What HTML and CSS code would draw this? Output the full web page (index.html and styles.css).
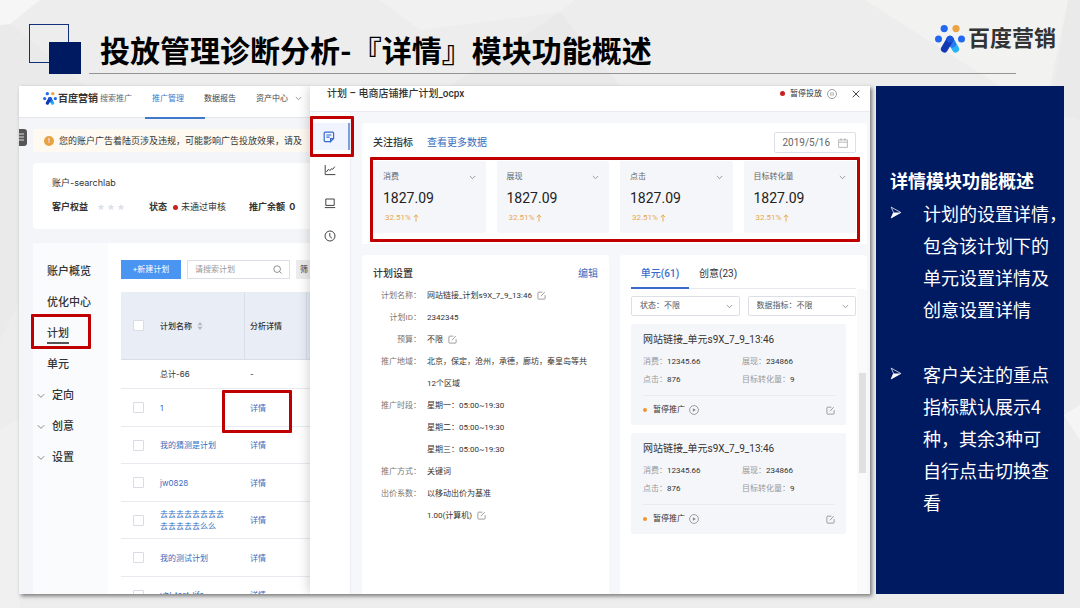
FILE: index.html
```html
<!DOCTYPE html>
<html lang="zh-CN">
<head>
<meta charset="utf-8">
<meta name="viewport" content="width=device-width, initial-scale=1">
<title>投放管理诊断分析-『详情』模块功能概述</title>
<link rel="stylesheet" href="styles.css">
</head>
<body>
<svg class="defs" width="0" height="0" aria-hidden="true">
  <symbol id="paw" viewBox="0 0 30 28">
    <circle cx="9.2" cy="3.6" r="3.6" fill="#2468f2"/>
    <circle cx="21" cy="3.6" r="3.6" fill="#eba443"/>
    <circle cx="3.5" cy="14" r="3.5" fill="#2468f2"/>
    <circle cx="26.5" cy="14" r="3.5" fill="#2468f2"/>
    <path d="M15 14.4 20.6 24" stroke="#27b3f5" stroke-width="7" stroke-linecap="round"/>
    <path d="M15 14.4 17.6 19" stroke="#2a7cf0" stroke-width="7" stroke-linecap="round"/>
    <path d="M15 14.4 9.4 24" stroke="#1238b4" stroke-width="7" stroke-linecap="round"/>
    <circle cx="15" cy="14.2" r="3.5" fill="#1c55dc"/>
  </symbol>
  <symbol id="chev" viewBox="0 0 8 6"><path d="M.8 1.2 4 4.4 7.2 1.2" fill="none" stroke="currentColor"/></symbol>
  <symbol id="edit" viewBox="0 0 10 10"><path d="M6 1.3H1.8Q1 1.3 1 2.1V8.2Q1 9 1.8 9H8.2Q9 9 9 8.2V4.6M4.4 5.8 8.6 1.2" fill="none" stroke="currentColor" stroke-width=".9"/></symbol>
  <symbol id="play" viewBox="0 0 10 10"><circle cx="5" cy="5" r="4.4" fill="none" stroke="currentColor" stroke-width=".8"/><path d="M3.9 3.2 6.9 5 3.9 6.8Z" fill="currentColor"/></symbol>
  <symbol id="star" viewBox="0 0 10 10"><path d="M5 .8 6.2 3.7 9.4 3.9 6.9 5.9 7.7 9 5 7.3 2.3 9 3.1 5.9 .6 3.9 3.8 3.7Z" fill="#dcdfec"/></symbol>
  <symbol id="up" viewBox="0 0 6 9"><path d="M3 8.6V1M.5 3.6 3 1 5.5 3.6" fill="none" stroke="currentColor" stroke-width="1.1"/></symbol>
  <symbol id="arrow" viewBox="0 0 12 14"><path d="M.8 1.2 11.2 7 .8 12.8 3.4 7Z" fill="none" stroke="#fff" stroke-width=".8"/><path d="M3.2 7H11.4L.6 13.2Z" fill="#fff"/></symbol>
</svg>

<div class="slide">
  <svg class="backdrop" viewBox="0 0 1080 608" preserveAspectRatio="none" aria-hidden="true">
    <path d="M0 0H40L10 24 0 25Z" fill="#f6f6f6"/>
    <path d="M0 25H12L90 90 20 300 0 340Z" fill="#eaeaeb"/>
    <path d="M380 0H575L560 12 420 30Z" fill="#f1f1f1"/>
    <path d="M560 12 620 86H450Z" fill="#e9e9ea"/>
    <path d="M865 0H1068L1050 86H1000Z" fill="#f2f2f1"/>
    <path d="M1068 0H1080V120L1050 112Z" fill="#eaeaeb"/>
    <path d="M1064 415 1080 405V440Z" fill="#f5f5f5"/>
    <path d="M0 430 20 418V608H0Z" fill="#f0f0f0"/>
  </svg>

  <header class="slide-head">
    <div class="mark" aria-hidden="true"></div>
    <div class="headline">
      <h1>投放管理诊断分析-『详情』模块功能概述</h1>
      <div class="brand"><svg class="brand-paw"><use href="#paw"/></svg><span>百度营销</span></div>
    </div>
  </header>

  <main class="board">
    <div class="shot">
      <section class="base">
        <nav class="topnav">
          <svg class="small-paw"><use href="#paw"/></svg><b class="logo-text">百度营销</b><span class="product">搜索推广</span>
          <a class="nav-link active" href="#">推广管理</a>
          <a class="nav-link" href="#">数据报告</a>
          <a class="nav-link" href="#">资产中心 <svg class="chev"><use href="#chev"/></svg></a>
        </nav>
        <div class="base-body">
          <div class="dock" aria-hidden="true"><svg viewBox="0 0 8 16"><path d="M0 5H5M0 8H5M0 11H5" stroke="#ddd" fill="none"/></svg></div>
          <div class="notice"><span class="warn">!</span>您的账户广告着陆页涉及违规，可能影响广告投放效果，请及</div>
          <div class="account">
            <div class="account-name">账户-searchlab</div>
            <div class="account-row">
              <b>客户权益</b>
              <span class="stars"><svg><use href="#star"/></svg><svg><use href="#star"/></svg><svg><use href="#star"/></svg></span>
              <b>状态</b><i class="dot red"></i><span class="state">未通过审核</span>
              <b class="balance">推广余额&nbsp; 0</b>
            </div>
          </div>
          <div class="workspace">
            <nav class="side">
              <a href="#">账户概览</a>
              <a href="#">优化中心</a>
              <a class="current" href="#"><span>计划</span></a>
              <a href="#">单元</a>
              <a class="fold" href="#"><svg class="chev"><use href="#chev"/></svg>定向</a>
              <a class="fold" href="#"><svg class="chev"><use href="#chev"/></svg>创意</a>
              <a class="fold" href="#"><svg class="chev"><use href="#chev"/></svg>设置</a>
            </nav>
            <div class="plans">
              <div class="tools">
                <button class="new">+新建计划</button>
                <div class="search">
                  <input type="text" placeholder="请搜索计划" aria-label="请搜索计划">
                  <svg viewBox="0 0 10 10"><circle cx="4.6" cy="4.6" r="3.7" fill="none" stroke="#777" stroke-width=".9"/><path d="M7.2 7.2 9.4 9.4" stroke="#777" stroke-width=".9"/></svg>
                </div>
                <button class="filter">筛</button>
              </div>
              <table>
                <thead><tr><th class="c-check"><input type="checkbox" aria-label="全选"></th><th class="c-name">计划名称 <svg class="sort" viewBox="0 0 6 8"><path d="M3 0 5.6 3.3H.4ZM3 8 .4 4.7H5.6Z" fill="#b3b8c6"/></svg></th><th class="c-detail">分析详情</th><th></th></tr></thead>
                <tbody>
                  <tr class="total"><td></td><td>总计-66</td><td>-</td><td></td></tr>
                  <tr><td><input type="checkbox" aria-label="1"></td><td><a href="#">1</a></td><td class="marked"><a href="#">详情</a></td><td></td></tr>
                  <tr><td><input type="checkbox" aria-label="我的猜测是计划"></td><td><a href="#">我的猜测是计划</a></td><td><a href="#">详情</a></td><td></td></tr>
                  <tr><td><input type="checkbox" aria-label="jw0828"></td><td><a href="#">jw0828</a></td><td><a href="#">详情</a></td><td></td></tr>
                  <tr><td><input type="checkbox" aria-label="去去去"></td><td><a href="#">去去去去去去去去<br>去去去去去么么</a></td><td><a href="#">详情</a></td><td></td></tr>
                  <tr><td><input type="checkbox" aria-label="我的测试计划"></td><td><a href="#">我的测试计划</a></td><td><a href="#">详情</a></td><td></td></tr>
                  <tr><td><input type="checkbox" aria-label="ybl-test-life"></td><td><a href="#">ybl-test-life</a></td><td><a href="#">详情</a></td><td></td></tr>
                </tbody>
              </table>
            </div>
          </div>
        </div>
      </section>

      <section class="drawer">
        <div class="drawer-head">
          <h2>计划 – 电商店铺推广计划_ocpx</h2>
          <i class="dot red"></i><span class="pause-text">暂停投放</span>
          <svg class="pause" viewBox="0 0 10 10"><circle cx="5" cy="5" r="4.5" fill="none" stroke="#888" stroke-width=".8"/><path d="M3.9 3.2V6.8M6.1 3.2V6.8" stroke="#888" stroke-width=".8"/></svg>
          <button class="close" aria-label="关闭"><svg viewBox="0 0 8 8"><path d="M.7.7 7.3 7.3M7.3.7.7 7.3" stroke="#444"/></svg></button>
        </div>
        <div class="drawer-body">
          <nav class="rail">
            <a class="on" href="#" aria-label="详情"><svg viewBox="0 0 12 12"><path d="M7.6 10.6H2.2Q1.2 10.6 1.2 9.6V2.2Q1.2 1.2 2.2 1.2H9.6Q10.6 1.2 10.6 2.2V7.4L7.6 10.6V7.6H10.6M3.4 4H8.4M3.4 6.2H6.6" fill="none" stroke="#3a6bcb" stroke-width="1.2"/></svg></a>
            <a href="#" aria-label="趋势"><svg viewBox="0 0 12 12"><path d="M1.2 1V10.6H11.4M2.4 8 4.6 5.2 6 6.6 7.6 4.6 8.6 5.4 10.8 2.6" fill="none" stroke="#444"/></svg></a>
            <a href="#" aria-label="设备"><svg viewBox="0 0 12 12"><path d="M1.8 2H10.2V8.4H1.8ZM.8 10.6H11.2" fill="none" stroke="#444"/></svg></a>
            <a href="#" aria-label="历史"><svg viewBox="0 0 12 12"><circle cx="6" cy="6" r="5" fill="none" stroke="#444"/><path d="M5.8 3V6.4L8 8.4" fill="none" stroke="#444"/></svg></a>
          </nav>
          <div class="content">
            <section class="card focus">
              <div class="focus-head">
                <h3>关注指标</h3><a class="more" href="#">查看更多数据</a>
                <button class="date">2019/5/16<svg viewBox="0 0 10 10"><path d="M.6 1.8H9.4V9.4H.6ZM.6 4.2H9.4M3 .2V2.8M7 .2V2.8" fill="none" stroke="#aaa" stroke-width=".8"/></svg></button>
              </div>
              <div class="metrics">
                <div class="metric"><div class="metric-name">消费<svg class="chev"><use href="#chev"/></svg></div><div class="value">1827.09</div><div class="rate">32.51%<svg><use href="#up"/></svg></div></div>
                <div class="metric"><div class="metric-name">展现<svg class="chev"><use href="#chev"/></svg></div><div class="value">1827.09</div><div class="rate">32.51%<svg><use href="#up"/></svg></div></div>
                <div class="metric"><div class="metric-name">点击<svg class="chev"><use href="#chev"/></svg></div><div class="value">1827.09</div><div class="rate">32.51%<svg><use href="#up"/></svg></div></div>
                <div class="metric"><div class="metric-name">目标转化量<svg class="chev"><use href="#chev"/></svg></div><div class="value">1827.09</div><div class="rate">32.51%<svg><use href="#up"/></svg></div></div>
              </div>
            </section>
            <div class="pair">
              <section class="card settings">
                <div class="settings-head"><h3>计划设置</h3><a href="#">编辑</a></div>
                <dl>
                  <dt>计划名称：</dt><dd>网站链接_计划s9X_7_9_13:46<svg class="edit"><use href="#edit"/></svg></dd>
                  <dt>计划ID：</dt><dd>2342345</dd>
                  <dt>预算：</dt><dd>不限<svg class="edit"><use href="#edit"/></svg></dd>
                  <dt>推广地域：</dt><dd>北京，保定，沧州，承德，廊坊，秦皇岛等共<br>12个区域</dd>
                  <dt>推广时段：</dt><dd>星期一：05:00~19:30<br>星期二：05:00~19:30<br>星期三：05:00~19:30</dd>
                  <dt>推广方式：</dt><dd>关键词</dd>
                  <dt>出价系数：</dt><dd>以移动出价为基准<br>1.00(计算机)<svg class="edit"><use href="#edit"/></svg></dd>
                </dl>
              </section>
              <section class="card units">
                <div class="tabs"><button class="tab on">单元(61)</button><button class="tab">创意(23)</button></div>
                <div class="unit-area">
                  <div class="filters">
                    <div class="pick"><select aria-label="状态"><option>状态：不限</option></select><svg class="chev"><use href="#chev"/></svg></div>
                    <div class="pick"><select aria-label="数据指标"><option>数据指标：不限</option></select><svg class="chev"><use href="#chev"/></svg></div>
                  </div>
                  <article class="unit">
                    <h4>网站链接_单元s9X_7_9_13:46</h4>
                    <div class="stats"><span>消费：<b>12345.66</b></span><span>展现：<b>234866</b></span><span>点击：<b>876</b></span><span>目标转化量：<b>9</b></span></div>
                    <div class="unit-foot"><i class="dot orange"></i>暂停推广<svg class="play"><use href="#play"/></svg><svg class="edit"><use href="#edit"/></svg></div>
                  </article>
                  <article class="unit">
                    <h4>网站链接_单元s9X_7_9_13:46</h4>
                    <div class="stats"><span>消费：<b>12345.66</b></span><span>展现：<b>234866</b></span><span>点击：<b>876</b></span><span>目标转化量：<b>9</b></span></div>
                    <div class="unit-foot"><i class="dot orange"></i>暂停推广<svg class="play"><use href="#play"/></svg><svg class="edit"><use href="#edit"/></svg></div>
                  </article>
                  <div class="track"><div class="thumb"></div></div>
                </div>
              </section>
            </div>
          </div>
        </div>
      </section>
    </div>

    <aside class="notes">
      <h2>详情模块功能概述</h2>
      <ul>
        <li><svg><use href="#arrow"/></svg><p>计划的设置详情，<br>包含该计划下的<br>单元设置详情及<br>创意设置详情</p></li>
        <li><svg><use href="#arrow"/></svg><p>客户关注的重点<br>指标默认展示4<br>种，其余3种可<br>自行点击切换查<br>看</p></li>
      </ul>
    </aside>
  </main>
</div>
</body>
</html>
```

FILE: styles.css
```css
*, *::before, *::after { box-sizing: border-box; }
body {
  margin: 0;
  font-family: Roboto, "Noto Sans CJK SC", sans-serif;
  font-size: 8px;
  line-height: 12px;
  color: #333;
  background: #ededed;
}
h1, h2, h3, h4, p, ul, dl, dd { margin: 0; padding: 0; }
a { color: #3a6bbd; text-decoration: none; }
button, input, select { font: inherit; color: inherit; border: 0; padding: 0; background: none; }
svg { display: block; flex: none; }
.defs { position: absolute; }

.slide {
  position: relative;
  display: flex;
  flex-direction: column;
  height: 100vh;
  padding: 0 16px 14px 19px;
  overflow: hidden;
}
.backdrop { position: absolute; inset: 0; width: 100%; height: 100%; }

/* slide heading */
.slide-head { position: relative; display: flex; height: 86px; padding: 0 48px 0 10px; flex: none; }
.mark { position: relative; width: 52px; height: 50px; margin-top: 24px; }
.mark::before { content: ""; position: absolute; left: 0; top: 0; width: 40px; height: 39px; border: 1px solid #12307c; }
.mark::after { content: ""; position: absolute; right: 0; bottom: 0; width: 32px; height: 32px; background: #001a62; }
.headline {
  flex: 1;
  display: flex;
  justify-content: space-between;
  height: 74px;
  margin-left: 8px;
  padding-left: 11px;
  border-bottom: 1px solid #949494;
}
.headline h1 { align-self: flex-end; font-size: 30px; line-height: 42px; font-weight: 700; color: #000; white-space: nowrap; }
.brand { display: flex; align-items: center; gap: 3px; height: 30px; margin: 24px -40px 0 0; font-size: 22px; font-weight: 700; color: #333; white-space: nowrap; }
.brand-paw { width: 30px; height: 28px; }

.board { position: relative; display: flex; gap: 6px; flex: 1; min-height: 0; }
.shot { flex: 1; display: flex; min-width: 0; overflow: hidden; background: #fff; box-shadow: 2px 2px 4px #777; }

/* page under the drawer */
.base { width: 291px; flex: none; display: flex; flex-direction: column; overflow: hidden; white-space: nowrap; background: #f3f5f9; }
.topnav { display: flex; align-items: center; height: 32px; padding: 0 0 6px 24px; background: #fff; border-bottom: 1px solid #e3e5ea; flex: none; }
.small-paw { width: 14px; height: 13px; }
.logo-text { margin-left: 1px; font-size: 10px; }
.product { margin-left: 2px; color: #666; }
.nav-link { display: flex; align-items: center; gap: 7px; margin-left: 20px; color: #444; position: relative; }
.nav-link.active { color: #4078cc; }
.nav-link.active::after { content: ""; position: absolute; left: -7px; right: -21px; bottom: -14px; height: 2px; background: #4078cc; }
.chev { width: 7px; height: 5px; color: #888; }
.base-body { position: relative; flex: 1; min-height: 0; padding: 11px 0 0 14px; display: flex; flex-direction: column; }
.dock { position: absolute; left: 0; top: 11px; width: 8px; height: 17px; border-radius: 0 3px 3px 0; background: #555; }
.notice { display: flex; align-items: center; height: 23px; padding-left: 11px; background: #fef9f1; font-size: 9px; color: #333; flex: none; }
.warn { flex: none; width: 10px; height: 10px; margin-right: 5px; border-radius: 50%; background: #e8a33e; color: #fff; font-size: 8px; line-height: 10px; text-align: center; }
.account { display: flex; flex-direction: column; gap: 12px; height: 66px; margin-top: 11px; padding: 14px 0 0 19px; background: #fff; border-radius: 4px 0 0 4px; flex: none; font-family: Inter, "Noto Sans CJK SC", sans-serif; font-size: 9px; }
.account-name { font-size: 9px; }
.account-row { display: flex; align-items: center; }
.stars { display: flex; gap: 2px; margin: 0 24px 0 9px; }
.stars svg { width: 8px; height: 8px; }
.dot { display: block; width: 5px; height: 5px; border-radius: 50%; flex: none; }
.red { background: #c9211e; }
.orange { background: #f2942a; }
.account-row .dot { margin: 0 3px 0 6px; }
.balance { margin-left: 23px; }
.workspace { flex: 1; display: flex; min-height: 0; margin-top: 14px; background: #fff; }
.side { width: 75px; flex: none; padding-top: 13px; background: #fafbfd; }
.side a { position: relative; display: flex; align-items: center; height: 31px; padding-left: 14px; font-size: 11px; font-weight: 500; color: #333; }
.side a.fold { padding-left: 4px; gap: 7px; }
.side .chev { width: 8px; height: 6px; }
.side .current span { margin-top: 2px; line-height: 16px; border-bottom: 2px solid #555; }
.side .current::after { content: ""; position: absolute; left: -2px; top: -4px; width: 60px; height: 35px; border: 3px solid #c00000; border-radius: 1px; }
.plans { flex: none; width: 203px; padding: 17px 0 0 13px; }
.tools { display: flex; gap: 6px; height: 19px; }
.new { flex: none; width: 60px; background: #4a94f2; color: #fff; }
.search { flex: none; display: flex; align-items: center; width: 103px; padding: 0 7px; border: 1px solid #dcdfe6; }
.search input { flex: 1; min-width: 0; outline: 0; }
.search input::placeholder { color: #999; }
.search svg { width: 9px; height: 9px; }
.filter { flex: 1; background: #ececee; text-align: left; padding-left: 4px; }
table { width: 190px; margin-top: 13px; border-spacing: 0; table-layout: fixed; font-family: Inter, "Noto Sans CJK SC", sans-serif; }
th { height: 68px; padding: 0; background: #e9edf6; border-bottom: 1px solid #d9dde8; text-align: left; font-weight: 500; }
.c-check { width: 39px; }
.c-name { width: 84px; }
.c-detail { width: 62px; border-left: 1px solid #dadfea; padding-left: 5px; }
th:last-child { border-left: 1px solid #dadfea; }
.sort { display: inline-block; width: 6px; height: 8px; vertical-align: -1px; margin-left: 3px; }
td { height: 38px; padding: 0; border-bottom: 1px solid #e9ebf1; }
tr:nth-child(odd) td { height: 37px; }
tr.total td { height: 29px; }
td:nth-child(3) { padding-left: 6px; }
input[type="checkbox"] { appearance: none; display: block; width: 11px; height: 11px; margin: 0 0 0 12px; border: 1px solid #d9dce4; border-radius: 1px; background: #fff; }
.marked { position: relative; }
.marked::after { content: ""; position: absolute; left: -22px; top: 1px; width: 70px; height: 43px; border: 3px solid #c00000; border-radius: 1px; }

/* detail drawer */
.drawer { position: relative; flex: 1; min-width: 0; display: flex; flex-direction: column; background: #f5f7fb; box-shadow: 0 0 12px rgba(0, 0, 0, .22); }
.drawer-head { display: flex; align-items: center; height: 26px; padding: 0 10px 10px 17px; background: #fff; border-bottom: 1px solid #e9ecf2; flex: none; }
.drawer-head h2 { flex: 1; font-size: 10px; font-weight: 500; line-height: 14px; white-space: nowrap; }
.pause-text { margin: 0 5px; }
.pause { width: 10px; height: 10px; }
.close { margin-left: 15px; }
.close svg { width: 8px; height: 8px; }
.drawer-body { flex: 1; display: flex; min-height: 0; }
.rail { width: 41px; flex: none; padding-top: 11px; background: #fff; border-right: 1px solid #eceef3; }
.rail a { position: relative; display: flex; align-items: center; justify-content: center; height: 27px; margin-bottom: 6px; }
.rail svg { width: 12px; height: 12px; }
.rail .on { background: #eff4fe; border-right: 2px solid #7f9fd8; }
.rail .on::after { content: ""; position: absolute; inset: -7px -6px -7px 0; border: 3px solid #c00000; border-radius: 1px; }
.content { flex: 1; min-width: 0; display: flex; flex-direction: column; gap: 11px; padding: 11px 3px 0 11px; }
.card { background: #fff; border-radius: 4px 4px 0 0; }
.focus { padding: 9px 11px 11px; flex: none; }
.focus-head { display: flex; align-items: center; height: 21px; }
h3 { font-size: 10px; font-weight: 500; line-height: 14px; }
.more { margin-left: 14px; font-size: 10px; }
.date { display: flex; align-items: center; gap: 8px; height: 21px; margin-left: auto; padding: 0 7px; border: 1px solid #dcdfe6; border-radius: 2px; font-size: 10px; color: #666; }
.date svg { width: 10px; height: 10px; }
.metrics { position: relative; display: grid; grid-template-columns: repeat(4, 1fr); gap: 11px; margin-top: 8px; }
.metrics::after { content: ""; position: absolute; inset: -4px -4px -9px -3px; border: 3px solid #c00000; border-radius: 1px; }
.metric { height: 72px; padding: 10px; background: #f5f6fa; border-radius: 2px; }
.metric-name { display: flex; align-items: center; justify-content: space-between; color: #666; }
.value { margin-top: 6px; font-size: 14px; line-height: 18px; color: #222; }
.rate { display: flex; align-items: center; gap: 2px; margin: 5px 0 0 2px; font-size: 8px; color: #e8a64c; }
.rate svg { width: 6px; height: 8px; }
.pair { flex: 1; display: grid; grid-template-columns: 1fr 1fr; gap: 11px; min-height: 0; }
.settings { padding: 12px 11px; }
.settings-head { display: flex; justify-content: space-between; line-height: 14px; font-size: 10px; }
dl { display: grid; grid-template-columns: 48px 1fr; column-gap: 6px; margin-top: 4px; line-height: 22px; white-space: nowrap; }
dt { text-align: right; color: #777; }
.edit { display: inline-block; width: 9px; height: 9px; margin-left: 5px; vertical-align: -2px; color: #888; }
.units { display: flex; flex-direction: column; padding-left: 11px; min-height: 0; }
.tabs { display: flex; height: 34px; margin-right: 11px; border-bottom: 1px solid #e6e8ee; flex: none; }
.tab { padding: 5px 0 0 10px; font-size: 10px; }
.tab.on { width: 58px; padding: 6px 0 0; margin-bottom: -1px; color: #3a6bcb; font-weight: 500; border-bottom: 2px solid #3a6bcb; }
.unit-area { position: relative; flex: 1; padding: 7px 11px 0 0; }
.filters { display: grid; grid-template-columns: 1fr 1fr; gap: 8px; }
.pick { position: relative; }
.pick select { appearance: none; width: 100%; height: 20px; padding: 0 8px; border: 1px solid #dcdfe6; border-radius: 2px; color: #555; background: #fff; }
.pick .chev { position: absolute; right: 7px; top: 8px; }
.unit { margin: 8px 10px 0 0; padding: 9px 11px 0 12px; height: 101px; background: #f5f6fa; border-radius: 2px; }
h4 { font-size: 10px; font-weight: 400; line-height: 14px; white-space: nowrap; }
.stats { display: grid; grid-template-columns: 99px 1fr; row-gap: 6px; padding: 9px 0 9px; color: #999; border-bottom: 1px solid #e9ebf0; white-space: nowrap; }
.stats b { font-weight: 400; color: #333; }
.unit-foot { display: flex; align-items: center; height: 28px; }
.unit-foot .dot { width: 4px; height: 4px; margin-right: 6px; }
.play { width: 10px; height: 10px; margin-left: 4px; color: #888; }
.unit-foot .edit { display: block; margin-left: auto; }
.track { position: absolute; right: 0; top: 0; bottom: 0; width: 10px; padding: 84px 1px 0 2px; background: #fafafb; }
.thumb { height: 100px; background: #dfe0e2; }

/* explanatory column */
.notes { width: 188px; flex: none; padding: 77px 6px 0 14px; background: #001a62; color: #fff; font-family: "Noto Sans CJK SC", sans-serif; font-size: 18px; line-height: 32px; white-space: nowrap; }
.notes h2 { font-size: 18px; font-weight: 700; line-height: 34px; }
.notes ul { display: grid; gap: 33px; list-style: none; }
.notes li { display: grid; grid-template-columns: 33px 1fr; }
.notes li svg { width: 12px; height: 13px; margin-top: 9px; }
```
